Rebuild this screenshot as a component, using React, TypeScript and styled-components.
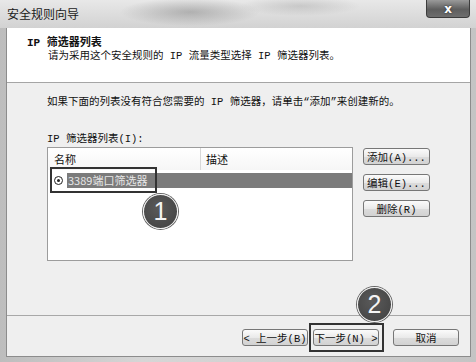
import React from 'react'
import styled, { createGlobalStyle } from 'styled-components'

const GlobalStyle = createGlobalStyle`
  html, body {
    margin: 0;
    padding: 0;
    background: #ffffff;
  }
  body {
    font-family: "Noto Sans CJK SC", sans-serif;
  }
`

const dialogFont = `"Liberation Mono", "Noto Sans CJK SC", monospace`

const Window = styled.div`
  position: relative;
  width: 476px;
  height: 362px;
  box-sizing: border-box;
  display: flex;
  flex-direction: column;
  background: linear-gradient(to right, #bdbdbd, #d6d6d6 30%, #cfcfcf 70%, #c4c4c4);
  padding: 0 5px 5px 6px;
  overflow: hidden;
`

const TitleBar = styled.div`
  height: 28px;
  flex: none;
  display: flex;
  align-items: flex-start;
  margin: 0 -5px 0 -6px;
  padding-left: 7px;
  background:
    radial-gradient(ellipse 70px 14px at 190px 12px, rgba(90, 90, 90, 0.35), transparent),
    radial-gradient(ellipse 60px 10px at 300px 6px, rgba(120, 120, 120, 0.25), transparent),
    linear-gradient(to bottom, #e8e8e8, #d2d2d2);
`

const TitleText = styled.span`
  font-size: 12px;
  line-height: 28px;
  color: #1a1a1a;
`

const CloseButton = styled.div`
  margin-left: auto;
  margin-right: 6px;
  width: 42px;
  height: 17px;
  border: 1px solid #3c3c3c;
  border-top: none;
  border-radius: 0 0 4px 4px;
  background: linear-gradient(to bottom, #9a9a9a, #5e5e5e 55%, #6e6e6e);
  display: flex;
  align-items: center;
  justify-content: center;
  color: #fff;
  font-family: "DejaVu Sans", sans-serif;
  font-weight: bold;
  font-size: 12px;
  text-shadow: 0 0 2px #222;
`

const Content = styled.div`
  flex: 1;
  display: flex;
  flex-direction: column;
  border: 1px solid #8c8c8c;
  border-top: none;
  font-family: ${dialogFont};
  font-size: 10.5px;
  color: #111;
`

const Header = styled.div`
  height: 55px;
  flex: none;
  box-sizing: border-box;
  background: #ffffff;
  border-bottom: 1px solid #a5a5a5;
  padding: 8px 0 0 20px;
`

const Heading = styled.div`
  font-weight: bold;
  font-size: 11px;
  line-height: 14px;
`

const SubHeading = styled.div`
  padding-left: 21px;
  line-height: 13px;
`

const Body = styled.div`
  flex: 1;
  background: #efefef;
  display: flex;
  flex-direction: column;
  padding: 12px 0 0 40px;
`

const Line = styled.div<{ $gap?: number }>`
  line-height: 14px;
  margin-top: ${p => p.$gap ?? 0}px;
`

const ListArea = styled.div`
  display: flex;
  margin-top: 1px;
`

const ListBox = styled.div`
  width: 306px;
  height: 114px;
  box-sizing: border-box;
  background: #ffffff;
  border: 1px solid #9c9c9c;
  font-family: "Noto Sans CJK SC", sans-serif;
  font-size: 11px;
`

const ColumnHeader = styled.div`
  display: flex;
  height: 22px;
  background: linear-gradient(to bottom, #ffffff, #f6f6f6);
`

const HeaderCell = styled.div<{ $width?: number }>`
  width: ${p => (p.$width ? `${p.$width}px` : 'auto')};
  flex: ${p => (p.$width ? 'none' : 1)};
  padding-left: ${p => (p.$width ? 6 : 5)}px;
  line-height: 22px;
  box-sizing: border-box;
  border-right: ${p => (p.$width ? '1px solid #d8d8d8' : 'none')};
  color: #111;
`

const ItemRow = styled.div`
  display: flex;
  align-items: center;
  height: 16px;
  margin-top: 2px;
`

const NameCell = styled.div`
  position: relative;
  display: flex;
  align-items: center;
  padding-left: 6px;
  height: 16px;

  &::after {
    content: '';
    position: absolute;
    left: 2px;
    width: 107px;
    top: -5px;
    bottom: -5px;
    border: 2px solid #333;
    box-sizing: border-box;
  }
`

const Radio = styled.span`
  width: 9px;
  height: 9px;
  box-sizing: border-box;
  border: 1.5px solid #222;
  border-radius: 50%;
  display: flex;
  align-items: center;
  justify-content: center;
  margin-right: 4px;

  &::before {
    content: '';
    width: 3px;
    height: 3px;
    border-radius: 50%;
    background: #222;
  }
`

const Selection = styled.div`
  flex: 1;
  height: 15px;
  background: #7b7b7b;
  color: #e6e6e6;
  line-height: 15px;
  padding-left: 1px;
`

const SideButtons = styled.div`
  display: flex;
  flex-direction: column;
  gap: 9px;
  margin-left: 10px;
  padding-top: 1px;
`

const Button = styled.div<{ $width?: number; $mark?: boolean }>`
  position: relative;
  width: ${p => p.$width ?? 67}px;
  height: 17px;
  box-sizing: border-box;
  border: 1px solid #777;
  border-radius: 3px;
  background: linear-gradient(to bottom, #fbfbfb, #eaeaea 50%, #dcdcdc 51%, #d2d2d2);
  display: flex;
  align-items: center;
  justify-content: center;
  font-family: ${dialogFont};
  font-size: 10.5px;
  color: #111;
  white-space: pre;

  &::after {
    content: '';
    display: ${p => (p.$mark ? 'block' : 'none')};
    position: absolute;
    top: -7px;
    bottom: -7px;
    left: -5px;
    right: -6px;
    border: 2px solid #333;
  }
`

const Footer = styled.div`
  height: 41px;
  flex: none;
  box-sizing: border-box;
  background: #efefef;
  border-top: 1px solid #a8a8a8;
  display: flex;
  justify-content: flex-end;
  align-items: flex-start;
  padding: 13px 11px 0 0;
  gap: 5px;
`

const Spacer = styled.div`
  width: 4px;
`

const Badge = styled.div<{ $x: number; $y: number }>`
  position: absolute;
  left: ${p => p.$x}px;
  top: ${p => p.$y}px;
  width: 33px;
  height: 33px;
  border-radius: 50%;
  background: radial-gradient(circle at 45% 40%, #5a5a5a, #404040);
  border: 1px solid #f2f2f2;
  box-shadow: 0 0 0 1px #666;
  color: #f4f4f4;
  font-family: "Liberation Sans", Arial, sans-serif;
  font-size: 25px;
  line-height: 33px;
  text-align: center;
`

export default function App() {
  return (
    <>
      <GlobalStyle />
      <Window>
        <TitleBar>
          <TitleText>安全规则向导</TitleText>
          <CloseButton>x</CloseButton>
        </TitleBar>
        <Content>
          <Header>
            <Heading>IP 筛选器列表</Heading>
            <SubHeading>请为采用这个安全规则的 IP 流量类型选择 IP 筛选器列表。</SubHeading>
          </Header>
          <Body>
            <Line>如果下面的列表没有符合您需要的 IP 筛选器，请单击“添加”来创建新的。</Line>
            <Line $gap={23}>IP 筛选器列表(I):</Line>
            <ListArea>
              <ListBox>
                <ColumnHeader>
                  <HeaderCell $width={153}>名称</HeaderCell>
                  <HeaderCell>描述</HeaderCell>
                </ColumnHeader>
                <ItemRow>
                  <NameCell>
                    <Radio />
                  </NameCell>
                  <Selection>3389端口筛选器</Selection>
                </ItemRow>
              </ListBox>
              <SideButtons>
                <Button>添加(A)...</Button>
                <Button>编辑(E)...</Button>
                <Button>删除(R)</Button>
              </SideButtons>
            </ListArea>
          </Body>
          <Footer>
            <Button $width={66}>&lt; 上一步(B)</Button>
            <Button $width={66} $mark>下一步(N) &gt;</Button>
            <Spacer />
            <Button $width={66}>取消</Button>
          </Footer>
        </Content>
        <Badge $x={143} $y={194}>1</Badge>
        <Badge $x={357} $y={287}>2</Badge>
      </Window>
    </>
  )
}
